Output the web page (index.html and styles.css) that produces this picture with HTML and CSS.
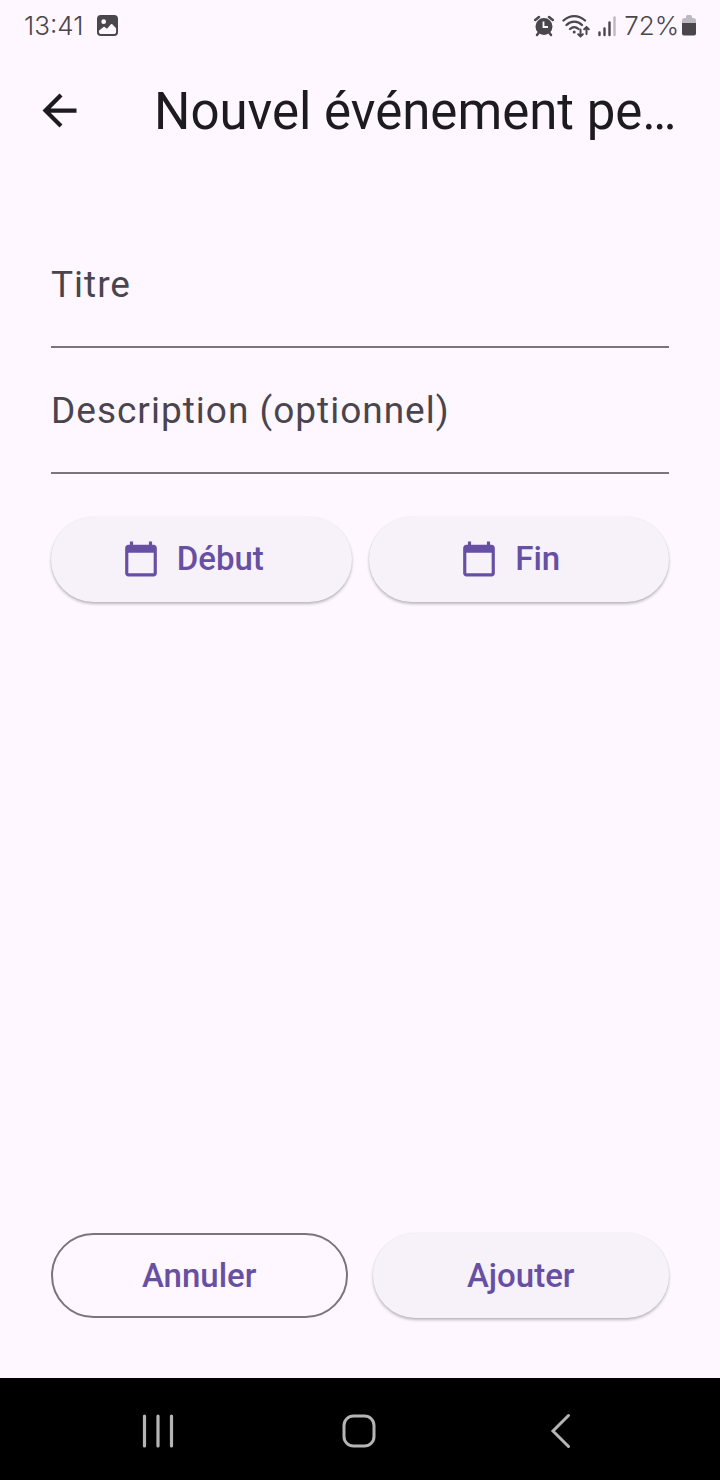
FILE: index.html
```html
<!DOCTYPE html>
<html lang="fr">
<head>
  <meta charset="utf-8">
  <meta name="viewport" content="width=device-width, initial-scale=1">
  <title>Nouvel événement</title>
  <link rel="stylesheet" href="styles.css">
</head>
<body>
  <div class="status">
    <div class="status-group status-group--start">
      <span class="status-text">13:41</span>
      <svg width="21" height="21" viewBox="0 0 22 22" aria-hidden="true">
        <path fill="currentColor" fill-rule="evenodd" d="M4 0h14a4 4 0 0 1 4 4v14a4 4 0 0 1-4 4H4a4 4 0 0 1-4-4V4a4 4 0 0 1 4-4zM7 4.500a2.500 2.500 0 1 0 0 5 2.500 2.500 0 0 0 0-5zM2 17.500c0 1.500 1 2.500 2.500 2.500h13c1.500 0 2.500-1 2.500-2.500V14l-4-4.300a1 1 0 0 0-1.400 0L10.500 14.500 8 12.500a1 1 0 0 0-1.300 0L2 16.500z"/>
      </svg>
    </div>
    <div class="status-group">
      <svg width="20" height="22" viewBox="0 0 20 22" aria-hidden="true">
        <circle cx="10" cy="11.500" r="8.500" fill="currentColor"/>
        <path d="M1.200 5 5 2M18.800 5 15 2M4.500 18 3 20M15.500 18l1.500 2" stroke="currentColor" stroke-width="2.400" stroke-linecap="round"/>
        <path d="M9.500 6.500V12H14" fill="none" stroke="#fef7ff" stroke-width="1.800"/>
      </svg>
      <svg width="28" height="24" viewBox="0 0 28 24" aria-hidden="true">
        <g fill="none" stroke="currentColor" stroke-width="2.300" stroke-linecap="round">
          <path d="M1.500 6.500C8 .6 16.500.6 23 6.500M4.500 11c4.500-4.500 11-4.500 15.500 0M8 15c3-2.600 5.500-2.600 8.500 0"/>
          <path d="M18.500 15.500V22M16.200 20.200l2.300 2.200 2.300-2.200M24.500 20v-6.500M22.200 15.300l2.300-2.200 2.300 2.200" stroke-width="2"/>
        </g>
        <circle cx="12.200" cy="18" r="1.500" fill="currentColor"/>
      </svg>
      <svg width="18" height="22" viewBox="0 0 18 22" aria-hidden="true">
        <g stroke="currentColor" stroke-width="2.400" stroke-linecap="round">
          <path d="M1.500 17.500V20M6.500 13.500V20M11.500 7.500V20"/>
          <path d="M16.500 2.500V20" opacity=".35"/>
        </g>
      </svg>
      <span class="status-text status-battery">72%
        <svg width="14" height="22" viewBox="0 0 14 22" aria-hidden="true">
          <path d="M4 1.500Q4 0 5.500 0h3Q10 0 10 1.500V3h1.500Q14 3 14 5.500V8H0V5.500Q0 3 2.500 3H4z" fill="currentColor" opacity=".35"/>
          <path d="M0 8h14v10.500q0 2-2 2H2q-2 0-2-2z" fill="currentColor"/>
        </svg>
      </span>
    </div>
  </div>

  <header class="app-bar">
    <button class="back" type="button" aria-label="Retour">
      <svg width="51" height="51" viewBox="0 0 24 24" aria-hidden="true"><path fill="currentColor" d="M20 11H7.830l5.590-5.590L12 4l-8 8 8 8 1.410-1.410L7.830 13H20z"/></svg>
    </button>
    <h1 class="title">Nouvel événement pe…</h1>
  </header>

  <main>
    <form class="form">
      <div class="field">
        <label for="titre">Titre</label>
        <input id="titre" type="text">
      </div>
      <div class="field">
        <label for="description">Description (optionnel)</label>
        <input id="description" type="text">
      </div>
      <div class="dates">
        <button class="button button--raised button--icon" type="button">
          <svg width="38" height="38" viewBox="0 0 24 24" aria-hidden="true"><path fill="currentColor" d="M20 3h-1V1h-2v2H7V1H5v2H4c-1.100 0-2 .9-2 2v16c0 1.100.9 2 2 2h16c1.100 0 2-.9 2-2V5c0-1.100-.9-2-2-2zm0 18H4V8h16z"/></svg>
          Début
        </button>
        <button class="button button--raised button--icon" type="button">
          <svg width="38" height="38" viewBox="0 0 24 24" aria-hidden="true"><path fill="currentColor" d="M20 3h-1V1h-2v2H7V1H5v2H4c-1.100 0-2 .9-2 2v16c0 1.100.9 2 2 2h16c1.100 0 2-.9 2-2V5c0-1.100-.9-2-2-2zm0 18H4V8h16z"/></svg>
          Fin
        </button>
      </div>
      <div class="actions">
        <button class="button button--outlined" type="button">Annuler</button>
        <button class="button button--raised" type="submit">Ajouter</button>
      </div>
    </form>
  </main>

  <nav class="system-nav" aria-label="Système">
    <button type="button" aria-label="Applications récentes">
      <svg width="40" height="40" viewBox="0 0 40 40" aria-hidden="true"><path d="M6.500 5v30M20 5v30M33.500 5v30" stroke="currentColor" stroke-width="3.200" stroke-linecap="round"/></svg>
    </button>
    <button type="button" aria-label="Accueil">
      <svg width="40" height="40" viewBox="0 0 40 40" aria-hidden="true"><rect x="5" y="5" width="30" height="30" rx="9.500" fill="none" stroke="currentColor" stroke-width="3"/></svg>
    </button>
    <button type="button" aria-label="Précédent">
      <svg width="40" height="40" viewBox="0 0 40 40" aria-hidden="true"><path d="M28.500 4.500 13 20l15.500 15.500" fill="none" stroke="currentColor" stroke-width="3" stroke-linecap="round" stroke-linejoin="miter"/></svg>
    </button>
  </nav>
</body>
</html>
```

FILE: styles.css
```css
:root {
  --surface: #fef7ff;
  --surface-low: #f7f2fa;
  --on-surface: #1d1b20;
  --on-surface-variant: #49454f;
  --outline: #79747e;
  --primary: #6750a4;
}

* {
  box-sizing: border-box;
}

body {
  display: flex;
  flex-direction: column;
  min-height: 100vh;
  margin: 0;
  background: var(--surface);
  color: var(--on-surface);
  font-family: Roboto, "Noto Sans", sans-serif;
}

button,
input {
  font: inherit;
  color: inherit;
  background: none;
  border: 0;
  padding: 0;
}

svg {
  display: block;
  flex: none;
}

.status {
  display: flex;
  justify-content: space-between;
  align-items: center;
  height: 51px;
  padding: 0 24px;
  color: #49464c;
}

.status-group {
  display: flex;
  align-items: center;
  gap: 8px;
}

.status-group--start {
  gap: 13px;
}

.status-text {
  font-family: Inter, Roboto, sans-serif;
  font-size: 26px;
  font-weight: 300;
  line-height: 32px;
}

.status-battery {
  display: flex;
  align-items: center;
  gap: 3px;
}

.app-bar {
  display: flex;
  align-items: center;
  height: 119px;
  padding-right: 34px;
}

.back {
  display: grid;
  place-items: center;
  flex: none;
  width: 119px;
  height: 119px;
}

.title {
  margin: 0 0 0 35px;
  padding-top: 2px;
  min-width: 0;
  font-size: 51px;
  font-weight: 400;
  line-height: 64px;
  white-space: nowrap;
}

main {
  display: flex;
  flex: 1;
  padding: 52px 51px 60px;
}

.form {
  display: flex;
  flex: 1;
  flex-direction: column;
}

.field {
  display: grid;
  border-bottom: 2px solid var(--outline);
  color: var(--on-surface-variant);
  font-size: 37px;
  line-height: 44px;
  /* Body text tracking */
  letter-spacing: 1px;
}

.field label,
.field input {
  grid-area: 1 / 1;
  min-width: 0;
  padding: 41px 0 39px;
}

.dates,
.actions {
  display: grid;
  grid-template-columns: 1fr 1fr;
}

.dates {
  gap: 17px;
  margin-top: 43px;
}

.actions {
  gap: 25px;
  margin-top: auto;
}

.button {
  display: flex;
  align-items: center;
  justify-content: center;
  gap: 17px;
  height: 85px;
  border-radius: 43px;
  color: var(--primary);
  font-size: 33px;
  font-weight: 500;
  line-height: 40px;
}

.button--icon {
  padding: 0 51px 2px 34px;
}

.button--raised {
  background: var(--surface-low);
  box-shadow: 0 2px 3px rgba(0, 0, 0, 0.26), 0 0 2px rgba(0, 0, 0, 0.06);
}

.button--outlined {
  border: 2px solid var(--outline);
}

.system-nav {
  display: grid;
  grid-template-columns: repeat(3, 1fr);
  height: 102px;
  padding: 3px 60px 0 57px;
  background: #000;
  color: #b5b5b5;
}

.system-nav button {
  display: grid;
  place-items: center;
}
```
